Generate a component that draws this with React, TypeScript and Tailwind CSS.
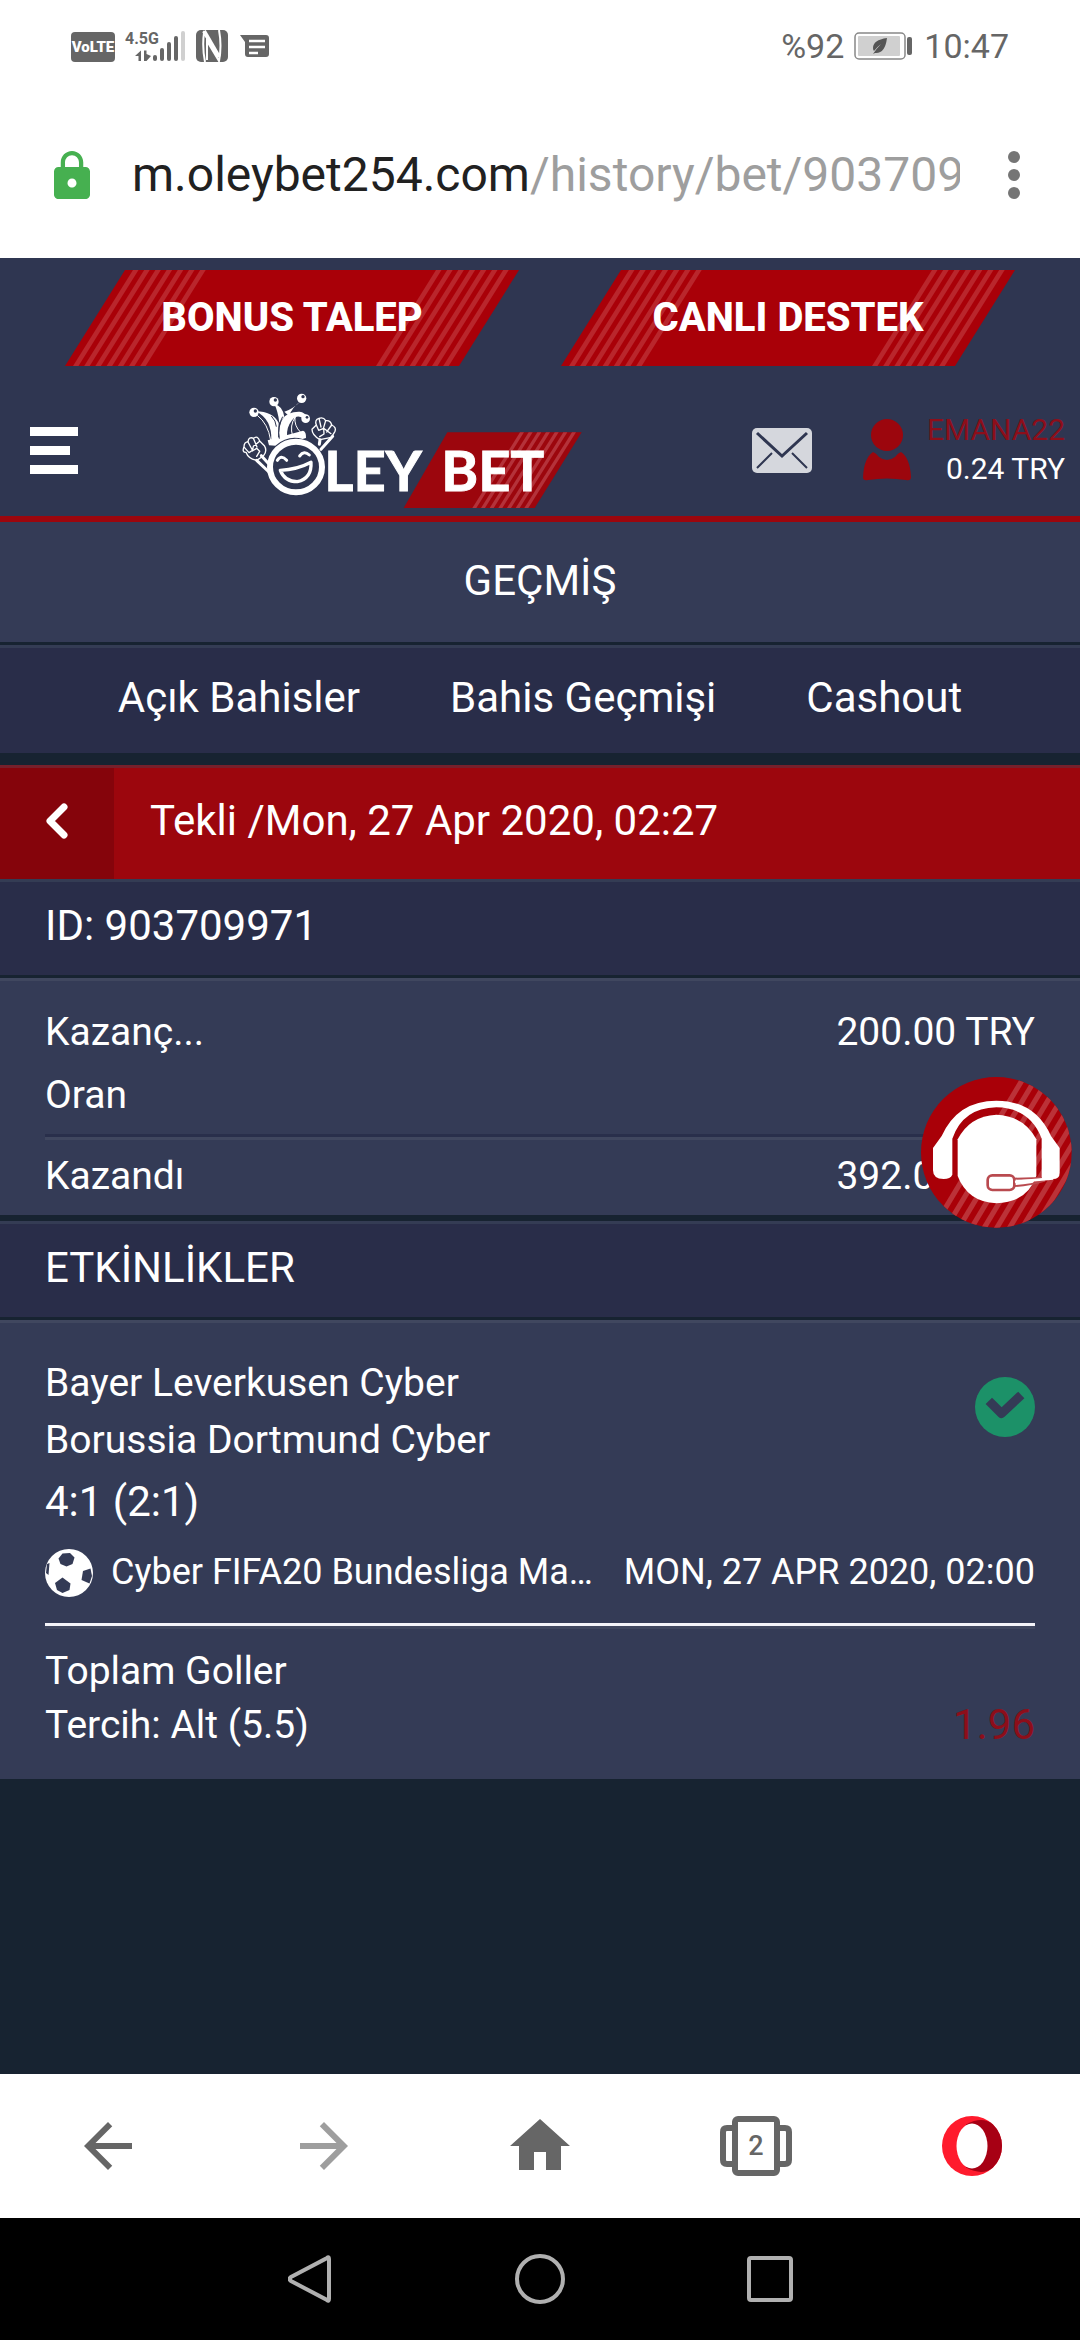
import { MdArrowBack, MdArrowForward, MdHome, MdLock } from "react-icons/md"

const tabs = ["Açık Bahisler", "Bahis Geçmişi", "Cashout"]

const stripes = [0, 1, 2, 3, 4, 5, 6]

function StatusBar() {
    return (
        <div className="flex h-[92px] items-center justify-between px-[71px] text-[34px] text-[#666666]">
            <svg className="h-8 w-[198px]" viewBox="0 0 198 32" role="img" aria-label="VoLTE, 4.5G, NFC">
                <rect x="0" y="2" width="44" height="30" rx="4" fill="#666" />
                <text x="22" y="22" textAnchor="middle" fill="#fff" fontSize="15" fontWeight="900" fontFamily="Roboto, sans-serif">VoLTE</text>
                <text x="54" y="14" fill="#666" fontSize="16" fontWeight="700" fontFamily="Roboto, sans-serif">4.5G</text>
                <g fill="#666">
                    <path d="M64 26 70 20.500V31H67.500V26ZM73 20.500H75.500V24L80 26 75.500 31H73Z" />
                    <rect x="82" y="25" width="4" height="6" rx="2" />
                    <rect x="89" y="18" width="4" height="13" rx="2" />
                    <rect x="96" y="12" width="4" height="19" rx="2" />
                    <rect x="103" y="6" width="4" height="25" rx="2" />
                    <rect x="110" y="1" width="4" height="30" rx="2" fill="#d0d0d0" />
                    <rect x="125" y="0" width="32" height="32" rx="5" />
                    <path d="M169 5H195Q198 5 198 8V24Q198 27 195 27H177Q174 27 174 24V12Z" />
                </g>
                <g fill="none" stroke="#fff">
                    <path d="M134 32Q131 16 133 3L148 26" strokeWidth="2" />
                    <path d="M133 1 148 27" strokeWidth="4" />
                    <path d="M148 0Q151 16 148 31L136 11V30" strokeWidth="2" />
                    <path d="M178 11H194M178 17H194M178 23H187" strokeWidth="2.500" />
                </g>
            </svg>
            <div className="flex items-center">
                <span>%92</span>
                <svg className="ml-[10px] mr-3 h-7 w-[58px]" viewBox="0 0 58 28" role="img" aria-label="Pil">
                    <rect x="1" y="1" width="50" height="26" rx="4" fill="#fff" stroke="#888" strokeWidth="1.500" />
                    <rect x="4" y="4" width="42" height="20" rx="1" fill="#d0d0d0" />
                    <rect x="53" y="5" width="5" height="18" rx="2" fill="#666" />
                    <path d="M33 6Q19 8 19 16Q19 18 20 19Q23 15 27 12Q23 16 19 22L21 21Q31 22 33 6Z" fill="#555" />
                </svg>
                <span>10:47</span>
            </div>
        </div>
    )
}

function AddressBar() {
    return (
        <div className="flex h-[166px] items-center pl-[54px] pr-12">
            <MdLock className="h-12 w-9 shrink-0 text-[#46b050]" viewBox="4 1 16 21" preserveAspectRatio="none" />
            <button className="ml-10 mr-9 flex-1 overflow-hidden whitespace-nowrap text-left text-[48px] leading-[60px] text-[#9e9e9e]">
                <span className="ml-[2px] text-[#212121]">m.oleybet254.com</span>/history/bet/903709
            </button>
            <button aria-label="Menü" className="flex h-16 w-9 flex-col items-center justify-center gap-[6px]">
                <span className="h-3 w-3 rounded-full bg-[#757575]" />
                <span className="h-3 w-3 rounded-full bg-[#757575]" />
                <span className="h-3 w-3 rounded-full bg-[#757575]" />
            </button>
        </div>
    )
}

function Banner({ label }: { label: string }) {
    return (
        <a href="#" className="relative flex h-24 w-[454px] items-center justify-center">
            <svg className="absolute inset-0 h-full w-full" viewBox="0 0 454 96" aria-hidden="true">
                <path d="M60 0H454L394 96H0Z" fill="#a90008" />
                {stripes.map((i) => (
                    <g key={i} fill="#b9262c">
                        <path d="M0 0h5.500l-60 96h-5.500Z" transform={`translate(${68 + i * 11.2} 0)`} />
                        <path d="M0 0h5.500l-60 96h-5.500Z" transform={`translate(${371 + i * 11.2} 0)`} />
                    </g>
                ))}
            </svg>
            <span className="relative text-[40px] font-extrabold leading-[48px] text-white">{label}</span>
        </a>
    )
}

function Logo() {
    return (
        <svg className="h-[122px] w-[345px]" viewBox="60 24 1035 366" role="img" aria-label="Oley Bet">
            <path d="M682 154H1085L944 381H551Z" fill="#9c060d" />
            {stripes.map((i) => (
                <path key={i} d="M0 0h12l-143 227h-12Z" transform={`translate(${900 + i * 26} 154)`} fill="#b4323a" />
            ))}
            <g fontFamily="Lato, sans-serif" fontSize="168" fontWeight="700" fill="#fff" stroke="#fff" strokeWidth="3">
                <text x="313" y="330">LEY</text>
                <text x="664" y="330">BET</text>
            </g>
            <g fill="none" stroke="#fff" strokeLinecap="round" strokeLinejoin="round">
                {/* face */}
                <ellipse cx="228" cy="258" rx="78" ry="76" strokeWidth="18" />
                <path d="M172 238Q184 220 200 238M239 225Q252 207 268 222" strokeWidth="9" />
                <path d="M181 268Q232 266 273 244Q276 292 232 302Q194 302 181 268Z" strokeWidth="10" />
                {/* arms and fists */}
                <path d="M110 238 150 276M124 224 146 248M338 166 303 205M300 176 298 190" strokeWidth="9" />
                <path d="M110 238Q85 234 78 214Q65 214 72 197Q72 184 84 182Q86 166 101 172Q113 162 119 180L133 194Q143 210 130 225Z" strokeWidth="4" />
                <path d="M84 183 97 207M101 174 111 198M73 199 87 215M119 181 100 196 97 210 110 202 119 211 110 226M87 215 99 207" strokeWidth="4" />
                <path d="M300 176Q276 163 276 145L289 132Q283 116 297 112Q310 107 317 119Q332 117 335 132Q350 139 345 151L334 169Z" strokeWidth="4" />
                <path d="M297 112 303 138M317 119 310 143M335 132 320 153M289 132 296 148 311 142 312 159 299 167M311 142 333 158" strokeWidth="4" />
            </g>
            {/* jester hat */}
            <g fill="#fff">
                <path d="M143 178 249 149Q259 151 258 171L248 174Q204 161 166 194L147 193Z" />
                <path d="M108 91Q158 91 176 126L174 175 154 178Q156 115 108 91Z" />
                <path d="M163 69Q187 74 193 107L178 125Q174 91 163 69Z" />
                <path d="M243 60Q218 77 207 105L193 92Q216 86 243 60Z" />
                <path d="M178 174Q171 90 239 92Q254 94 263 108L249 112Q231 99 216 118Q199 139 201 167Z" />
                <circle cx="102" cy="94" r="14" />
                <circle cx="162" cy="62" r="14" />
                <circle cx="245" cy="52" r="14" />
                <circle cx="257" cy="113" r="13" />
            </g>
            <g fill="none" stroke="#fff" strokeWidth="3">
                <path d="M112 103Q144 128 152 178M218 166Q208 133 226 108M225 107Q222 135 242 154" />
            </g>
            <g fill="#2f3651">
                <circle cx="106" cy="90" r="5" />
                <circle cx="166" cy="57" r="5" />
                <circle cx="249" cy="47" r="5" />
                <circle cx="261" cy="109" r="4" />
            </g>
            <path d="M178 173Q171 137 188 107M154 105Q168 119 169 137" fill="none" stroke="#2f3651" strokeWidth="3" />
        </svg>
    )
}

function Header() {
    return (
        <header className="border-b-[6px] border-[#9c060d] bg-[#2f3651]">
            <div className="flex justify-center gap-[42px] pb-[18px] pt-3">
                <Banner label="BONUS TALEP" />
                <Banner label="CANLI DESTEK" />
            </div>
            <div className="flex h-[132px] items-center pl-[30px] pr-[15px]">
                <button aria-label="Menü" className="flex w-12 flex-col gap-[10px]">
                    <span className="h-[9px] w-12 bg-white" />
                    <span className="h-[9px] w-10 bg-white" />
                    <span className="h-[9px] w-12 bg-white" />
                </button>
                <a href="#" className="ml-[162px]">
                    <Logo />
                </a>
                <a href="#" aria-label="Mesajlar" className="ml-auto">
                    <svg className="h-[45px] w-[60px]" viewBox="0 0 60 45">
                        <rect width="60" height="45" rx="5" fill="#d5d7dd" />
                        <path d="M5 5 30 28 55 5" fill="none" stroke="#2f3651" strokeWidth="3" />
                        <path d="M5 40 20 25M55 40 40 25" stroke="#2f3651" strokeWidth="2" />
                    </svg>
                </a>
                <a href="#" className="ml-[51px] flex items-center gap-4">
                    <svg className="h-[62px] w-12" viewBox="0 0 48 62" aria-hidden="true">
                        <ellipse cx="24" cy="16" rx="16" ry="16" fill="#9c060d" />
                        <path d="M10 33Q13 34 16 38Q24 44 32 38Q35 34 38 33Q47 39 48 58Q48 62 43 61Q24 58 5 61Q0 62 0 58Q1 39 10 33Z" fill="#9c060d" />
                    </svg>
                    <span className="flex flex-col pb-[2px] text-right text-[30px] leading-[39px] text-white">
                        <span className="text-[#8d0e1a]">EMANA22</span>
                        <span>0.24 TRY</span>
                    </span>
                </a>
            </div>
        </header>
    )
}

function SectionTitle({ children }: { children: React.ReactNode }) {
    return (
        <h2 className="border-b-[3px] border-t-[3px] border-b-[#172331] border-t-[#343c54] bg-[#292d49] px-[45px] pb-[18px] pt-3 text-[42px] leading-[63px]">
            {children}
        </h2>
    )
}

function SupportButton() {
    return (
        <button aria-label="Canlı destek" className="absolute right-2 top-24 z-10">
            <svg className="h-[151px] w-[151px]" viewBox="122 85 453 453">
                <defs>
                    <clipPath id="bubble">
                        <circle cx="348" cy="311" r="226" />
                    </clipPath>
                </defs>
                <circle cx="348" cy="311" r="226" fill="#a90008" />
                <g clipPath="url(#bubble)" fill="#bb3238">
                    {[0, 1, 2, 3, 4, 5, 6, 7, 8, 9].map((i) => (
                        <path key={i} d="M0 0h18l-276 460h-18Z" transform={`translate(${422 + i * 38} 85)`} />
                    ))}
                </g>
                <path d="M348 198Q432 202 468 272V382Q440 462 348 464Q262 460 232 382V272Q268 202 348 198Z" fill="#fff" />
                <path d="M158 298 184 262Q232 156 348 156Q464 156 512 262L538 298V372Q538 391 518 391H484V270Q450 178 348 176Q248 178 216 270V378Q210 391 190 391Q158 391 158 365Z" fill="#fff" />
                <rect x="322" y="380" width="80" height="44" rx="14" fill="#fff" stroke="#b94a4f" strokeWidth="8" />
                <path d="M402 390 484 388M402 412Q450 410 494 396" fill="none" stroke="#b94a4f" strokeWidth="6" />
                <path d="M404 400 518 389" stroke="#fff" strokeWidth="8" />
            </svg>
        </button>
    )
}

function FootballIcon() {
    return (
        <svg className="h-12 w-12 shrink-0" viewBox="0 0 48 48" aria-hidden="true">
            <circle cx="24" cy="24" r="24" fill="#fff" />
            <g fill="#343b56">
                <path d="M13.500 9.500 17.500 4.500 25 4 29.500 8.500 27.500 15 21.500 17.500 15.500 15Z" />
                <path d="M10 34 17.500 28.500 25.500 34.500 24.500 41 17.500 44 12 41Z" />
                <path d="M38 22 45.500 19.500 47 27 44.500 34.500 36.500 31Z" />
                <path d="M2 15 4.500 14 3.500 26 1 24Z" />
            </g>
        </svg>
    )
}

function BetDetails() {
    return (
        <main className="flex-1 bg-[#172331] text-[39px] text-white">
            <h1 className="border-b-[3px] border-[#172331] bg-[#343b56] pb-[30px] pt-[27px] text-center text-[42px] leading-[63px]">
                GEÇMİŞ
            </h1>
            <nav className="mb-3 flex justify-center gap-[90px] border-t-[3px] border-[#343c54] bg-[#292d49] pb-6 pt-[18px] text-[42px] leading-[63px]">
                {tabs.map((tab) => (
                    <a key={tab} href="#">
                        {tab}
                    </a>
                ))}
            </nav>

            <div className="flex h-[114px] border-t-[3px] border-[#76202b] bg-[#9c060d] text-[42px]">
                <button aria-label="Geri" className="flex w-[114px] items-center justify-center bg-[#85040b] pb-[6px]">
                    <svg className="h-9 w-6" viewBox="0 0 24 36">
                        <path d="M19 4 5 18 19 32" fill="none" stroke="#fff" strokeWidth="7" strokeLinecap="round" strokeLinejoin="round" />
                    </svg>
                </button>
                <div className="pl-9 pt-[18px] leading-[69px]">Tekli /Mon, 27 Apr 2020, 02:27</div>
            </div>
            <SectionTitle>ID: 903709971</SectionTitle>

            <section className="relative border-b-[6px] border-t-[3px] border-b-[#172331] border-t-[#40475f] bg-[#343b56] px-[45px] pb-[7px] pt-5 leading-[63px]">
                <dl>
                    <div className="flex justify-between">
                        <dt>Kazanç...</dt>
                        <dd>200.00 TRY</dd>
                    </div>
                    <div className="flex justify-between border-b-[3px] border-[#292f4b] pb-[7px]">
                        <dt>Oran</dt>
                        <dd />
                    </div>
                    <div className="flex justify-between border-t-[3px] border-[#40475f] pt-[5px]">
                        <dt>Kazandı</dt>
                        <dd>392.00 TRY</dd>
                    </div>
                </dl>
                <SupportButton />
            </section>

            <SectionTitle>ETKİNLİKLER</SectionTitle>
            <section className="border-t-[3px] border-[#40475f] bg-[#343b56] px-[45px] pb-[27px] pt-8">
                <div className="flex justify-between">
                    <div className="leading-[57px]">
                        <p>Bayer Leverkusen Cyber</p>
                        <p>Borussia Dortmund Cyber</p>
                        <p className="text-[42px] leading-[66px]">4:1 (2:1)</p>
                    </div>
                    <svg className="mt-[22px] h-[60px] w-[60px]" viewBox="0 0 60 60" role="img" aria-label="Kazandı">
                        <circle cx="30" cy="30" r="30" fill="#1c9168" />
                        <path d="M17 27 26.500 36.500 43 21" fill="none" stroke="#343b56" strokeWidth="9" strokeLinejoin="round" strokeLinecap="square" />
                    </svg>
                </div>
                <div className="mb-[13px] flex items-center text-[36px] leading-[75px]">
                    <FootballIcon />
                    <span className="ml-[18px]">Cyber FIFA20 Bundesliga Ma…</span>
                    <span className="ml-auto">MON, 27 APR 2020, 02:00</span>
                </div>
                <div className="h-[6px] border-b-[3px] border-[#40475f] bg-[#f3f3f8]" />
                <div className="flex items-end justify-between pt-[15px] leading-[54px]">
                    <div>
                        <p>Toplam Goller</p>
                        <p>Tercih: Alt (5.5)</p>
                    </div>
                    <span className="text-[42px] text-[#8d0e1a]">1.96</span>
                </div>
            </section>
        </main>
    )
}

function BrowserBar() {
    return (
        <nav className="grid h-36 grid-cols-5 bg-white text-[#666666]">
            <button aria-label="Geri" className="flex items-center justify-center">
                <MdArrowBack className="h-[72px] w-[72px]" />
            </button>
            <button aria-label="İleri" className="flex items-center justify-center text-[#9e9e9e]">
                <MdArrowForward className="h-[72px] w-[72px]" />
            </button>
            <button aria-label="Ana sayfa" className="flex items-center justify-center">
                <MdHome className="h-[72px] w-[72px]" />
            </button>
            <button aria-label="Sekmeler" className="flex items-center justify-center">
                <svg className="h-[60px] w-[72px]" viewBox="0 0 72 60">
                    <path d="M15 12H7Q3 12 3 16V44Q3 48 7 48H15M57 12H65Q69 12 69 16V44Q69 48 65 48H57" fill="none" stroke="#666" strokeWidth="6" />
                    <rect x="15" y="3" width="42" height="54" rx="3" fill="#fff" stroke="#666" strokeWidth="6" />
                    <text x="36" y="39" textAnchor="middle" fontSize="27" fontWeight="500" fontFamily="Roboto, sans-serif" fill="#666">2</text>
                </svg>
            </button>
            <button aria-label="Opera" className="flex items-center justify-center">
                <svg className="h-[60px] w-[60px]" viewBox="0 0 60 60">
                    <circle cx="30" cy="30" r="30" fill="#ff1b2d" />
                    <path d="M24 8.500Q40 0 50.500 8Q60 17 60 30Q60 43 50.500 52Q40 60 24 51.500Z" fill="#a70014" />
                    <ellipse cx="30" cy="30" rx="15.500" ry="22.500" fill="#fff" />
                </svg>
            </button>
        </nav>
    )
}

function SystemBar() {
    return (
        <nav className="grid h-[122px] grid-cols-[230px_230px_230px] justify-center bg-black">
            <button aria-label="Sistem geri" className="flex items-center justify-center">
                <svg className="h-[50px] w-[44px]" viewBox="0 0 44 50">
                    <path d="M39 4Q41 2 41 5V45Q41 48 39 46L3 27Q0 25 3 23Z" fill="none" stroke="#b0b0b0" strokeWidth="4" />
                </svg>
            </button>
            <button aria-label="Ana ekran" className="flex items-center justify-center">
                <span className="h-[50px] w-[50px] rounded-full border-4 border-[#b0b0b0]" />
            </button>
            <button aria-label="Son uygulamalar" className="flex items-center justify-center">
                <span className="h-[46px] w-[46px] rounded-[4px] border-4 border-[#b0b0b0]" />
            </button>
        </nav>
    )
}

export default function App() {
    return (
        <div className="flex min-h-screen flex-col bg-white font-['Roboto',sans-serif]">
            <StatusBar />
            <AddressBar />
            <Header />
            <BetDetails />
            <BrowserBar />
            <SystemBar />
        </div>
    )
}
